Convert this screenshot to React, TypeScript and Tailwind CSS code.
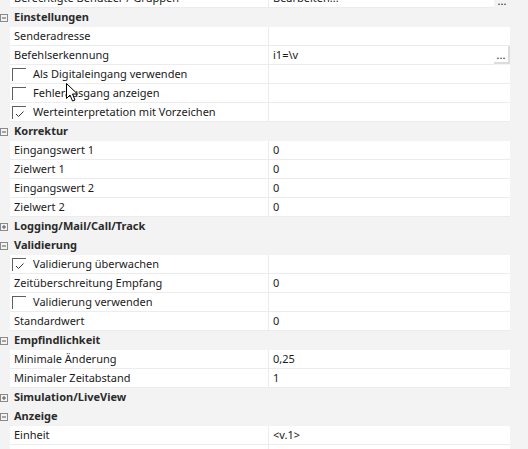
import React from "react";

type RowDef =
  | { kind: "header"; label: string; open: boolean }
  | { kind: "prop"; label: string; value?: string; button?: boolean; flatButton?: boolean }
  | { kind: "check"; label: string; checked: boolean; value?: string }
  | { kind: "empty" };

const ROWS: RowDef[] = [
  { kind: "prop", label: "Berechtigte Benutzer / Gruppen", value: "Bearbeiten...", flatButton: true },
  { kind: "header", label: "Einstellungen", open: true },
  { kind: "prop", label: "Senderadresse" },
  { kind: "prop", label: "Befehlserkennung", value: "i1=\\v", button: true },
  { kind: "check", label: "Als Digitaleingang verwenden", checked: false },
  { kind: "check", label: "Fehlerausgang anzeigen", checked: false },
  { kind: "check", label: "Werteinterpretation mit Vorzeichen", checked: true },
  { kind: "header", label: "Korrektur", open: true },
  { kind: "prop", label: "Eingangswert 1", value: "0" },
  { kind: "prop", label: "Zielwert 1", value: "0" },
  { kind: "prop", label: "Eingangswert 2", value: "0" },
  { kind: "prop", label: "Zielwert 2", value: "0" },
  { kind: "header", label: "Logging/Mail/Call/Track", open: false },
  { kind: "header", label: "Validierung", open: true },
  { kind: "check", label: "Validierung überwachen", checked: true },
  { kind: "prop", label: "Zeitüberschreitung Empfang", value: "0" },
  { kind: "check", label: "Validierung verwenden", checked: false },
  { kind: "prop", label: "Standardwert", value: "0" },
  { kind: "header", label: "Empfindlichkeit", open: true },
  { kind: "prop", label: "Minimale Änderung", value: "0,25" },
  { kind: "prop", label: "Minimaler Zeitabstand", value: "1" },
  { kind: "header", label: "Simulation/LiveView", open: false },
  { kind: "header", label: "Anzeige", open: true },
  { kind: "prop", label: "Einheit", value: "<v.1>" },
  { kind: "empty" },
];

function Expander({ open }: { open: boolean }) {
  return (
    <svg width="8" height="8" viewBox="0 0 8 8" className="block">
      <rect x="0.5" y="0.5" width="7" height="7" fill="none" stroke="#8a8a8a" />
      <line x1="2" y1="4" x2="6" y2="4" stroke="#555" />
      {!open && <line x1="4" y1="2" x2="4" y2="6" stroke="#555" />}
    </svg>
  );
}

function CheckBox({ checked }: { checked: boolean }) {
  return (
    <div className="relative h-[13px] w-[14px] shrink-0 border-l border-t border-[#5f5f5f]">
      {checked && (
        <svg width="10" height="8" viewBox="0 0 10 8" className="absolute left-[2px] top-[3px]">
          <path d="M1 4 L3.5 6.5 L8.5 1.5" fill="none" stroke="#333" strokeWidth="1" />
        </svg>
      )}
    </div>
  );
}

function Row({ row }: { row: RowDef }) {
  if (row.kind === "header") {
    return (
      <div className="flex h-[19px] items-center">
        <div className="flex w-[14px] shrink-0 items-center">
          <Expander open={row.open} />
        </div>
        <span className="font-bold text-[#2b2b2b]">{row.label}</span>
      </div>
    );
  }

  const value = row.kind === "empty" ? undefined : row.value;
  return (
    <div className="flex h-[19px]">
      <div className="w-[10px] shrink-0" />
      <div className="flex w-[258px] shrink-0 items-center border-b border-[#ececec] bg-white">
        {row.kind === "check" ? (
          <div className="flex items-center pl-[2px]">
            <CheckBox checked={row.checked} />
            <span className="pl-[7px]">{row.label}</span>
          </div>
        ) : row.kind === "prop" ? (
          <span className="pl-[4px]">{row.label}</span>
        ) : null}
      </div>
      <div className="w-px shrink-0 bg-[#ececec]" />
      {row.kind === "prop" && row.flatButton ? (
        <>
          <div className="flex w-[225px] shrink-0 items-center border-b border-[#ececec] bg-white pl-[4px]">
            {value}
          </div>
          <div className="flex w-[16px] shrink-0 items-end justify-center pb-[2px] leading-none">...</div>
        </>
      ) : row.kind === "prop" && row.button ? (
        <>
          <div className="flex w-[225px] shrink-0 items-center border-b border-[#ececec] bg-white pl-[4px]">
            {value}
          </div>
          <div className="flex h-[18px] w-[16px] shrink-0 items-end justify-center border-b-2 border-r-2 border-[#dcdcdc] bg-white pb-[2px] text-[11px] leading-none">
            ...
          </div>
        </>
      ) : (
        <div className="flex w-[241px] shrink-0 items-center border-b border-[#ececec] bg-white pl-[4px]">
          {value}
        </div>
      )}
    </div>
  );
}

function Cursor() {
  return (
    <svg
      width="13"
      height="20"
      viewBox="0 0 13 20"
      className="pointer-events-none absolute left-[66px] top-[83px]"
    >
      <path
        d="M0.5 0.5 L0.5 15.5 L4 12 L6.5 18 L9 17 L6.5 11 L11.5 11 Z"
        fill="#fff"
        stroke="#000"
        strokeWidth="1"
        strokeLinejoin="miter"
      />
    </svg>
  );
}

export default function App() {
  return (
    <div
      className="relative h-[449px] w-[528px] overflow-hidden bg-[#f3f3f3] text-[11px] text-[#1a1a1a]"
      style={{ fontFamily: '"Noto Sans", "Open Sans", sans-serif' }}
    >
      <div className="-mt-[11px] flex flex-col">
        {ROWS.map((row, i) => (
          <Row key={i} row={row} />
        ))}
      </div>
      <Cursor />
    </div>
  );
}
